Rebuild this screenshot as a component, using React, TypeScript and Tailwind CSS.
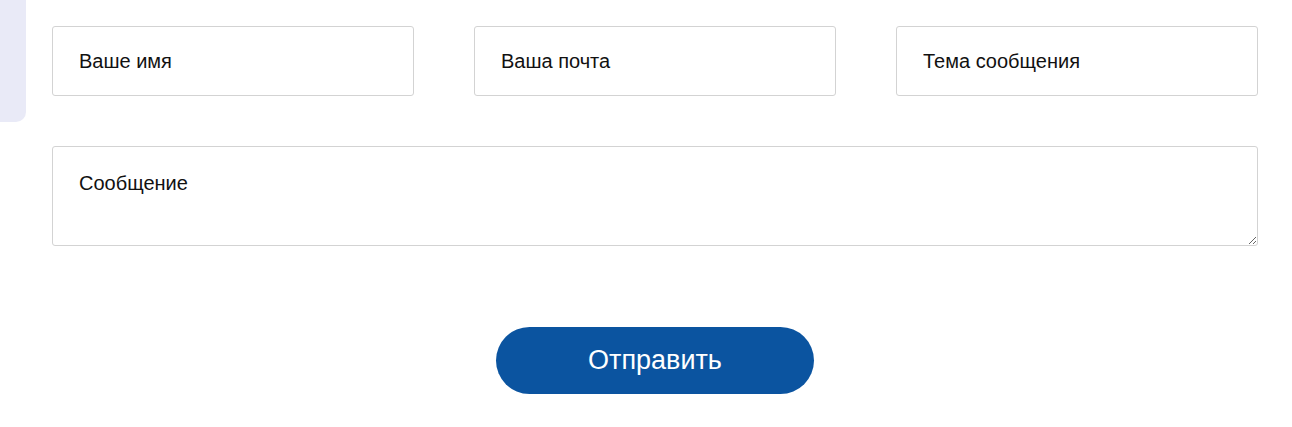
export default function App() {
  const fields = ["Ваше имя", "Ваша почта", "Тема сообщения"]

  return (
    <div
      className="flex min-h-[427px] w-[1292px] bg-white"
      style={{ fontFamily: "'Liberation Sans', Arial, sans-serif" }}
    >
      {/* Side panel edge */}
      <div className="h-[122px] w-[26px] shrink-0 self-start rounded-br-[10px] bg-[#e9eaf7]" />

      {/* Form */}
      <form className="ml-[26px] mr-[34px] flex w-[1206px] flex-col pt-[26px]">
        <div className="grid grid-cols-3 gap-[60px]">
          {fields.map((f) => (
            <input
              key={f}
              type="text"
              placeholder={f}
              className="h-[70px] rounded-[3px] border border-[#d3d3d3] px-[26px] text-[20px] text-[#111] placeholder:text-[#111] outline-none"
            />
          ))}
        </div>

        <textarea
          placeholder="Сообщение"
          className="mt-[50px] h-[100px] rounded-[3px] border border-[#d3d3d3] px-[26px] pt-[21px] text-[20px] text-[#111] placeholder:text-[#111] outline-none"
        />

        <div className="mt-[81px] flex justify-center">
          <button
            type="button"
            className="h-[67px] w-[318px] rounded-full bg-[#0b54a0] text-[27px] text-white"
          >
            Отправить
          </button>
        </div>
      </form>
    </div>
  )
}
